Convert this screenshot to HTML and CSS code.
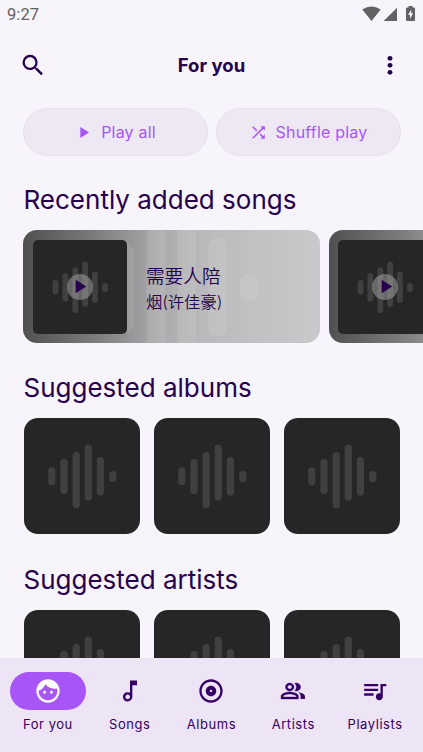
FILE: index.html
```
<!DOCTYPE html>
<html lang="en">
<head>
<meta charset="utf-8">
<title>For you</title>
<link rel="stylesheet" href="styles.css">
</head>
<body>
<svg class="defs" aria-hidden="true">
  <symbol id="wave" viewBox="0 0 116 116">
    <rect x="24.2" y="49.3" width="7.2" height="18" rx="3.6"/>
    <rect x="36.4" y="41" width="7.2" height="35" rx="3.6"/>
    <rect x="48.6" y="34" width="7.2" height="56" rx="3.6"/>
    <rect x="60.7" y="26.5" width="7.2" height="56" rx="3.6"/>
    <rect x="72.8" y="39" width="7.2" height="38.5" rx="3.6"/>
    <rect x="85.2" y="53" width="7.2" height="11" rx="3.6"/>
  </symbol>
  <symbol id="play" viewBox="0 0 24 24"><path d="M8 5v14l11-7z"/></symbol>
</svg>
<div class="screen">
  <div class="status">
    <span class="time">9:27</span>
    <svg class="status-icons" viewBox="0 0 54 16">
      <path d="M.3 3.500Q9.500-2.500 18.700 3.500L9.500 15z"/>
      <path d="M35 1.700V15H21.700z"/>
      <path fill-rule="evenodd" d="M46.500 0h4v1.500H52q1 0 1 1V14q0 1-1 1h-7q-1 0-1-1V2.500q0-1 1-1h1.500zM49.300 3.500 46 8.800h2v4l3.200-5.500h-2z"/>
    </svg>
  </div>
  <header class="topbar">
    <svg class="icon" viewBox="0 0 24 24"><path d="M15.500 14h-.79l-.28-.27A6.471 6.471 0 0 0 16 9.500 6.500 6.500 0 1 0 9.500 16c1.610 0 3.090-.59 4.230-1.570l.27.28v.79l5 4.990L20.490 19l-4.990-5zm-6 0C7.010 14 5 11.990 5 9.500S7.010 5 9.500 5 14 7.010 14 9.500 11.990 14 9.500 14z" transform="translate(0 .3)"/></svg>
    <h1>For you</h1>
    <svg class="icon" viewBox="0 0 24 24"><circle cx="12" cy="6.300" r="2.100"/><circle cx="12" cy="12.300" r="2.100"/><circle cx="12" cy="18.300" r="2.100"/></svg>
  </header>
  <div class="actions">
    <div class="pill"><svg class="pill-icon"><use href="#play"/></svg><span>Play all</span></div>
    <div class="pill"><svg class="pill-icon" viewBox="0 0 24 24"><path d="M10.590 9.170 5.410 4 4 5.410l5.170 5.170zM14.500 4l2.040 2.040L4 18.590 5.410 20 17.960 7.460 20 9.500V4zm.33 9.410-1.410 1.410 3.130 3.130L14.500 20H20v-5.500l-2.040 2.040z"/></svg><span>Shuffle play</span></div>
  </div>
  <h2 class="h-songs">Recently added songs</h2>
  <div class="songs">
    <article class="song">
      <svg class="song-bg"><use href="#wave"/></svg>
      <div class="thumb"><svg class="wave"><use href="#wave"/></svg><span class="play"><svg><use href="#play"/></svg></span></div>
      <div class="song-text"><div class="song-title">需要人陪</div><div class="song-artist">烟(许佳豪)</div></div>
    </article>
    <article class="song">
      <svg class="song-bg"><use href="#wave"/></svg>
      <div class="thumb"><svg class="wave"><use href="#wave"/></svg><span class="play"><svg><use href="#play"/></svg></span></div>
    </article>
  </div>
  <h2 class="h-albums">Suggested albums</h2>
  <div class="tiles">
    <div class="tile"><svg class="wave"><use href="#wave"/></svg></div>
    <div class="tile"><svg class="wave"><use href="#wave"/></svg></div>
    <div class="tile"><svg class="wave"><use href="#wave"/></svg></div>
  </div>
  <h2 class="h-artists">Suggested artists</h2>
  <div class="tiles">
    <div class="tile"><svg class="wave"><use href="#wave"/></svg></div>
    <div class="tile"><svg class="wave"><use href="#wave"/></svg></div>
    <div class="tile"><svg class="wave"><use href="#wave"/></svg></div>
  </div>
  <nav class="nav">
    <a class="item active"><span class="chip"><svg viewBox="0 0 24 24"><path d="M10.250 13a1.250 1.250 0 1 1-2.500 0 1.250 1.250 0 0 1 2.500 0zM15 11.750a1.250 1.250 0 1 0 0 2.500 1.250 1.250 0 0 0 0-2.500zM22 12c0 5.520-4.480 10-10 10S2 17.520 2 12 6.480 2 12 2s10 4.480 10 10zm-2 0c0-.78-.12-1.530-.33-2.240-.7.150-1.420.24-2.170.24a10 10 0 0 1-7.760-3.690A10.016 10.016 0 0 1 4 11.860c.01.040 0 .09 0 .14 0 4.410 3.590 8 8 8s8-3.590 8-8z"/></svg></span><span>For you</span></a>
    <a class="item"><span class="chip"><svg viewBox="0 0 24 24"><path d="m12 3 .01 10.550c-.59-.34-1.270-.55-2-.55a4.001 4.001 0 1 0 0 8c2.220 0 3.990-1.790 3.990-4V7h4V3zm-1.990 16c-1.100 0-2-.9-2-2s.9-2 2-2 2 .9 2 2-.9 2-2 2z"/></svg></span><span>Songs</span></a>
    <a class="item"><span class="chip"><svg viewBox="0 0 24 24"><path d="M12 2C6.480 2 2 6.480 2 12s4.480 10 10 10 10-4.480 10-10S17.520 2 12 2zm0 18c-4.410 0-8-3.590-8-8s3.590-8 8-8 8 3.590 8 8-3.590 8-8 8zm0-12.500c-2.490 0-4.500 2.010-4.500 4.500s2.010 4.500 4.500 4.500 4.500-2.010 4.500-4.500-2.010-4.500-4.500-4.500zm0 5.500c-.55 0-1-.45-1-1s.45-1 1-1 1 .45 1 1-.45 1-1 1z"/></svg></span><span>Albums</span></a>
    <a class="item"><span class="chip"><svg viewBox="0 0 24 24"><g transform="translate(.84 1.700) scale(.93 .86)"><path d="M16.670 13.130C18.040 14.060 19 15.320 19 17v3h4v-3c0-2.180-3.570-3.470-6.330-3.870z"/><path d="M15 12c2.210 0 4-1.790 4-4s-1.790-4-4-4c-.47 0-.91.100-1.330.24a5.980 5.980 0 0 1 0 7.520c.42.140.86.240 1.330.24zM9 12c2.210 0 4-1.790 4-4s-1.790-4-4-4-4 1.790-4 4 1.790 4 4 4zm0-6c1.100 0 2 .9 2 2s-.9 2-2 2-2-.9-2-2 .9-2 2-2zM9 13c-2.670 0-8 1.340-8 4v3h16v-3c0-2.660-5.330-4-8-4zm6 5H3v-.99C3.200 16.290 6.300 15 9 15s5.800 1.290 6 2z" stroke="currentColor" stroke-width=".35"/></g></svg></span><span>Artists</span></a>
    <a class="item"><span class="chip"><svg viewBox="0 0 24 24"><path d="M22 6h-5v8.180c-.31-.11-.65-.18-1-.18-1.660 0-3 1.340-3 3s1.340 3 3 3 3-1.340 3-3V8h3zM15 6H3v2h12zm0 4H3v2h12zm-4 4H3v2h8z" transform="translate(-.3 0)"/></svg></span><span>Playlists</span></a>
  </nav>
</div>
</body>
</html>
```
FILE: styles.css
```
* { box-sizing: border-box; }
body {
  margin: 0;
  background: #f7f4fb;
  color: #26004d;
  font-family: Inter, "Noto Sans CJK SC", sans-serif;
  overflow: hidden;
}
svg { display: block; fill: currentColor; }
.defs { position: absolute; width: 0; height: 0; }
.screen { display: flex; flex-direction: column; height: 752px; overflow: hidden; }
.screen > * { flex-shrink: 0; }

.status {
  height: 30px;
  padding: 0 7px 0 7px;
  display: flex;
  align-items: center;
  justify-content: space-between;
  color: #626164;
}
.time { font: 400 16.500px/30px Roboto, sans-serif; letter-spacing: .1px; }
.status-icons { width: 54px; height: 16px; margin-top: -2px; }

.topbar {
  height: 70px;
  padding: 0 19px;
  display: flex;
  align-items: center;
  justify-content: space-between;
}
.icon { width: 28px; height: 28px; }
h1 { margin: 0; font-size: 18.500px; font-weight: 700; line-height: 28px; letter-spacing: .05px; }

.actions { display: flex; gap: 8px; padding: 8px 22.500px 0; }
.pill {
  width: 185px;
  height: 48px;
  border-radius: 24px;
  border: 1px solid #e8e2ed;
  background: #eee8f4;
  color: #a855f7;
  display: flex;
  align-items: center;
  justify-content: center;
  gap: 8px;
  font-size: 16px;
  font-weight: 400;
  line-height: 20px;
  letter-spacing: .2px;
}
.pill-icon { width: 19px; height: 19px; }

h2 { margin: 0; padding-left: 23.500px; font-size: 26px; line-height: 32px; font-weight: 400; letter-spacing: 0; }
.h-songs { margin-top: 28px; }
.h-albums { margin-top: 29px; }
.h-artists { margin-top: 30px; }

.songs { display: flex; gap: 9px; margin-top: 14px; padding-left: 23.400px; }
.song {
  position: relative;
  flex: 0 0 296.500px;
  height: 113px;
  padding: 0 9.500px;
  display: flex;
  align-items: center;
  border-radius: 14px;
  overflow: hidden;
  background: linear-gradient(90deg, #505050 0, #626262 10%, #7b7b7b 24%, #98989a 37%, #acabad 47%, #b9b8ba 60%, #c0bfc1 75%, #c9c8cb 100%);
}
.song-bg { position: absolute; left: -1px; top: -92px; width: 297px; height: 297px; color: rgba(255, 255, 255, .1); }
.thumb {
  position: relative;
  width: 94px;
  height: 94px;
  border-radius: 5px;
  background: #262626;
}
.wave { width: 100%; height: 100%; color: #404040; }
.play {
  position: absolute;
  left: 34px;
  top: 34px;
  width: 26px;
  height: 26px;
  border-radius: 50%;
  background: rgba(180, 180, 180, .46);
  display: flex;
  align-items: center;
  justify-content: center;
}
.play svg { width: 23px; height: 23px; }
.song-text { position: relative; margin: 4px 0 0 19px; font-weight: 350; }
.song-title { font-size: 18.700px; line-height: 27px; }
.song-artist { font-size: 16.300px; line-height: 25px; }

.tiles { display: flex; gap: 14px; margin-top: 14px; padding-left: 23.500px; }
.tile { width: 116px; height: 116px; border-radius: 14px; background: #262626; }

.nav {
  position: absolute;
  left: 0;
  right: 0;
  top: 658px;
  height: 94px;
  padding: 14px 7px 0;
  display: flex;
  background: #ede4f5;
}
.item {
  flex: 1;
  display: flex;
  flex-direction: column;
  align-items: center;
  gap: 4px;
  font-size: 13px;
  line-height: 20px;
  font-weight: 400;
  letter-spacing: .55px;
  color: #350066;
}
.chip { width: 76px; height: 38px; border-radius: 19px; display: flex; align-items: center; justify-content: center; }
.chip svg { width: 28px; height: 28px; }
.active .chip { background: #a855f7; color: #fff; }
```
